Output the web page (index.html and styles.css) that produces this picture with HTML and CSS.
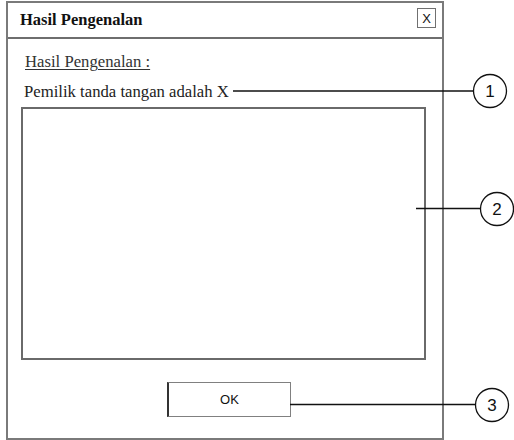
FILE: index.html
```html
<!DOCTYPE html>
<html lang="id">
<head>
<meta charset="utf-8">
<title>Hasil Pengenalan</title>
<link rel="stylesheet" href="styles.css">
</head>
<body>
<div class="dialog">
  <div class="titlebar">
    <span class="title">Hasil Pengenalan</span>
    <span class="close">X</span>
  </div>
  <div class="content">
    <div class="label">Hasil Pengenalan :</div>
    <div class="owner">Pemilik tanda tangan adalah X</div>
    <div class="result-box"></div>
    <div class="actions"><button class="ok">OK</button></div>
  </div>
</div>

<!-- numbered callouts pointing at the dialog parts -->
<svg class="callouts" width="514" height="440" viewBox="0 0 514 440">
  <g stroke="#111" stroke-width="1.4" fill="none">
    <line x1="233" y1="91" x2="473" y2="91"/>
    <line x1="416" y1="208.5" x2="480" y2="208.5"/>
    <line x1="290" y1="404.5" x2="475" y2="404.5"/>
  </g>
  <g stroke="#111" stroke-width="1.3" fill="#fff">
    <circle cx="490" cy="91" r="16.5"/>
    <circle cx="497" cy="209" r="16.5"/>
    <circle cx="492" cy="405" r="16.5"/>
  </g>
  <g class="num" text-anchor="middle">
    <text x="490" y="97">1</text>
    <text x="497" y="215">2</text>
    <text x="492" y="411">3</text>
  </g>
</svg>
</body>
</html>
```

FILE: styles.css
```css
html, body {
  margin: 0;
  padding: 0;
  background: #fff;
}

body {
  position: relative;
  width: 514px;
  height: 440px;
  overflow: hidden;
}

.dialog {
  box-sizing: border-box;
  width: 438px;
  height: 439px;
  margin: 1px 0 0 6px;
  border: 2px solid #7a7a7a;
  display: flex;
  flex-direction: column;
  background: #fff;
}

.titlebar {
  height: 34px;
  border-bottom: 2px solid #6e6e6e;
  display: flex;
  align-items: center;
  justify-content: space-between;
  padding: 0 6px 0 12px;
}

.title {
  font-family: "Liberation Serif", serif;
  font-weight: bold;
  font-size: 16.5px;
  color: #111;
}

.close {
  box-sizing: border-box;
  width: 19px;
  height: 20px;
  margin-top: -4px;
  border: 1.5px solid #707070;
  display: flex;
  align-items: center;
  justify-content: center;
  font-family: "Liberation Sans", sans-serif;
  font-size: 13px;
  color: #111;
}

.content {
  display: flex;
  flex-direction: column;
  padding: 14px 0 0 13px;
}

.label,
.owner {
  font-family: "Liberation Serif", serif;
  font-size: 16.7px;
  line-height: 18px;
  color: #222;
  margin-left: 4px;
}

.label {
  text-decoration: underline;
  text-underline-offset: 2px;
  color: #333;
}

.owner {
  margin-top: 12px;
  margin-left: 3px;
}

.result-box {
  box-sizing: border-box;
  width: 405px;
  height: 253px;
  margin-top: 6px;
  border: 2px solid #6a6a6a;
}

.actions {
  display: flex;
  padding-top: 22px;
  padding-left: 146px;
}

.ok {
  box-sizing: border-box;
  width: 124px;
  height: 35px;
  background: #fff;
  border: 1.5px solid #808080;
  border-left: 2px solid #333;
  border-radius: 0;
  font-family: "Liberation Sans", sans-serif;
  font-size: 13px;
  color: #111;
  padding: 0;
}

.callouts {
  position: absolute;
  left: 0;
  top: 0;
}

.num text {
  font-family: "Liberation Sans", sans-serif;
  font-size: 17px;
  fill: #111;
}
```
